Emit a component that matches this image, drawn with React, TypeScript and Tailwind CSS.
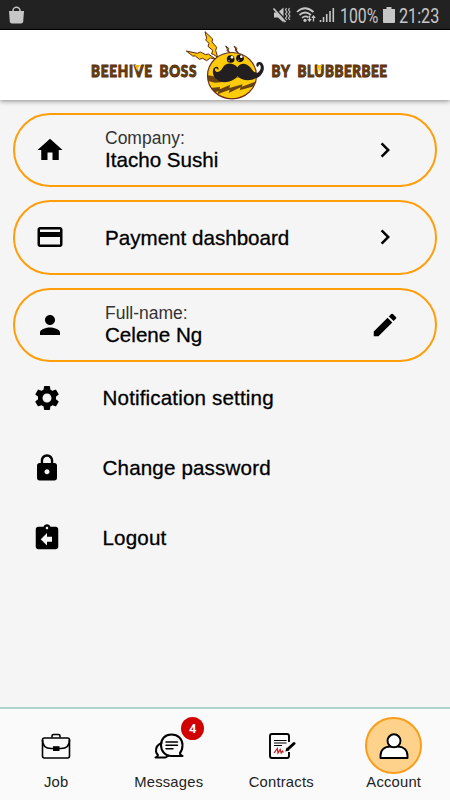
import type { ReactNode } from "react";
import {
  MdAssignmentReturn,
  MdChevronRight,
  MdCreditCard,
  MdEdit,
  MdHome,
  MdLock,
  MdPerson,
  MdSettings,
} from "react-icons/md";

const StatusBar = () => (
  <div className="flex h-[30px] items-center border-b border-black bg-[#222222] pl-2 text-[#c6c6c6]">
    <svg width="17" height="18" viewBox="0 0 17 18">
      <path
        d="M1 5h15l-.8 10.5Q15 17.500 13 17.500H4Q2 17.500 1.800 15.500Z"
        fill="currentColor"
      />
      <path
        d="M5 6V4.500a3.500 3.200 0 0 1 7 0V6"
        fill="none"
        stroke="currentColor"
        strokeWidth="1.500"
      />
    </svg>
    <svg width="63" height="18" viewBox="272 7 63 18" className="mt-[2px] ml-[247px]">
      <path d="M274 12.500h4l5.500-5v15l-5.500-5h-4z" fill="currentColor" />
      <path d="M273.500 7 287 21.500" stroke="#222" strokeWidth="1.800" />
      <path d="M273.500 8.500 285.500 22" stroke="currentColor" strokeWidth="1.700" />
      <path
        d="m286.500 8-1 2 1.500 2-1.500 2 1.500 2-1.500 2 1.500 2M289.500 8l-1 2 1.500 2-1.500 2 1.500 2-1.500 2 1.500 2"
        fill="none"
        stroke="currentColor"
        strokeWidth="1.100"
      />
      <path
        d="M297 12q8-7.500 16.500 0M299.500 15q5.500-5 11.500 0M302 18q3-3 6.500-.5"
        fill="none"
        stroke="currentColor"
        strokeWidth="1.700"
      />
      <circle cx="305" cy="20.300" r="1.600" fill="currentColor" />
      <path
        d="M309.500 15.500v5M313.500 16.500v5"
        fill="none"
        stroke="currentColor"
        strokeWidth="1.300"
      />
      <path d="m307.200 19 2.300 3 2.300-3zM311.200 18l2.300-3 2.300 3z" fill="currentColor" />
      <path
        d="M320.500 22v-2M323.500 22v-5M326.700 22v-8M330 22V11M333.300 22V8"
        stroke="currentColor"
        strokeWidth="1.600"
      />
    </svg>
    <span className="mt-[4px] ml-[5px] block w-[39px] origin-left scale-x-[0.81] font-['Roboto',sans-serif] text-[19.500px] leading-[30px] whitespace-nowrap">
      100%
    </span>
    <svg width="12" height="16" viewBox="0 0 12 16" className="ml-[4px]">
      <path d="M3.500 0h5v2H12v13q0 1-1 1H1q-1 0-1-1V2h3.500z" fill="currentColor" />
    </svg>
    <span className="mt-[4px] ml-[4px] block w-[44px] origin-left scale-x-[0.83] font-['Roboto',sans-serif] text-[19.500px] leading-[30px] whitespace-nowrap">
      21:23
    </span>
  </div>
);

const Logo = () => (
  <svg width="340" height="70" viewBox="70 30 340 70">
    <g
      transform="translate(0 76.700) scale(1 1.200)"
      fill="#6b4410"
      stroke="#5a2c0a"
      strokeWidth="0.800"
      fontFamily="'Lato', 'Liberation Sans', sans-serif"
      fontWeight="900"
      fontSize="13.500"
    >
      <text x="91" y="0" textLength="61">
        BEEHIVE
      </text>
      <text x="159.500" y="0" textLength="37">
        BOSS
      </text>
      <text x="271.500" y="0" textLength="18.500">
        BY
      </text>
      <text x="297.500" y="0" textLength="89.500">
        BLUBBERBEE
      </text>
    </g>
    <path d="m134.500 65 5.500 0-1.500 2.500-1.300 3.500z" fill="#f5b81c" />
    <path d="m317.500 65 4.500 0-1.500 3 1.500 0-4 5 1-3.500-2 0z" fill="#f5c51c" />
    <g transform="translate(190 28) scale(0.33333)">
      <g fill="#fbc70c" stroke="#5e2612" strokeWidth="3" strokeLinejoin="round">
        <path d="M45 11 68 33 66 42 80 58 77 67 83 88 70 79 65 78 68 67 54 55 57 46 47 36 50 31Z" />
        <path d="M-11 69 22 76 31 72 47 80 55 78 78 94 61 90 50 98 38 91 28 94 16 84 8 84Z" />
        <path d="m107 54 9 7-2 5 6 9-9-7 1-5zM132 54l9 7-2 5 6 9-9-7 1-5z" strokeWidth="3" />
      </g>
      <clipPath id="body">
        <ellipse cx="126" cy="143" rx="73" ry="69" />
      </clipPath>
      <g clipPath="url(#body)">
        <rect x="50" y="70" width="154" height="146" fill="#fccb0b" />
        <path
          d="M50 141 82 147 78 154 119 151 115 158 150 147 205 128 205 145 158 151 151 144 123 157 120 160 75 164 50 158Z"
          fill="#684311"
        />
        <path
          d="M55 181 90 177 89 184 121 170 118 180 158 169 155 176 200 160 195 174 149 187 152 178 116 195 119 185 82 199 86 190 57 196Z"
          fill="#684311"
        />
      </g>
      <ellipse cx="126" cy="143" rx="73.500" ry="69.500" fill="none" stroke="#6a2c18" strokeWidth="3.500" />
      <path
        d="M142 118C129 103 108 103 98 119 89 135 75 136 75 124 76 118 84 121 84 127 90 116 77 112 71 121 65 133 70 151 88 160 111 168 135 156 143 145 155 159 182 160 197 151 222 143 229 113 213 103 203 98 195 108 201 116 206 118 208 111 206 109 218 113 211 134 199 135 190 136 183 112 165 108 155 106 147 110 142 118Z"
        fill="#231f20"
      />
      <circle cx="122" cy="93" r="11.500" fill="#19110a" />
      <circle cx="150" cy="91" r="11.500" fill="#19110a" />
      <circle cx="126" cy="88" r="4" fill="#fff" />
      <circle cx="154" cy="86" r="4" fill="#fff" />
      <circle cx="117" cy="98" r="2.500" fill="#8d8d8d" />
      <circle cx="146" cy="97" r="2.500" fill="#8d8d8d" />
    </g>
  </svg>
);

interface ICard {
  icon: ReactNode;
  label?: string;
  title: string;
  action: ReactNode;
}

const Card = ({ icon, label, title, action }: ICard) => (
  <button className="flex h-[74.500px] w-full items-center rounded-full border-[2px] border-[#ff9d0a] pr-[35px] pl-[20px] text-left">
    {icon}
    <div className="ml-[40px] flex-1">
      {label ? (
        <p className="text-[17.500px] leading-[21px] text-[#333]">{label}</p>
      ) : (
        <div className="h-px" />
      )}
      <p className="text-[20.600px] leading-[22px] [-webkit-text-stroke:0.300px_black]">
        {title}
      </p>
    </div>
    {action}
  </button>
);

const cards: ICard[] = [
  {
    icon: <MdHome size={30} />,
    label: "Company:",
    title: "Itacho Sushi",
    action: <MdChevronRight size={30} />,
  },
  {
    icon: <MdCreditCard size={30} />,
    title: "Payment dashboard",
    action: <MdChevronRight size={30} />,
  },
  {
    icon: <MdPerson size={30} />,
    label: "Full-name:",
    title: "Celene Ng",
    action: <MdEdit size={30} />,
  },
];

const settings = [
  { icon: <MdSettings size={30} />, title: "Notification setting" },
  { icon: <MdLock size={30} />, title: "Change password" },
  { icon: <MdAssignmentReturn size={30} />, title: "Logout" },
];

const JobIcon = () => (
  <svg width="30" height="30" viewBox="0 0 30 30" fill="none" stroke="black" strokeWidth="1.600">
    <rect x="1.500" y="7" width="27" height="20" rx="2" />
    <path d="M11 6.500V5q0-1.500 1.500-1.500h5Q19 3.500 19 5v1.500" />
    <path d="M1.500 9q0 8.500 8.500 8.500h10q8.500 0 8.500-8.500" />
    <rect x="12" y="15.200" width="6.500" height="4.800" fill="black" stroke="none" />
  </svg>
);

const MessagesIcon = () => (
  <svg
    width="30"
    height="30"
    viewBox="0 0 30 30"
    fill="none"
    stroke="black"
    strokeWidth="2"
    strokeLinecap="round"
    strokeLinejoin="round"
  >
    <path d="M7.500 12Q1.500 14.500 2 20.500q.3 2 2 3.500-.5 2-2.500 2.500h10l3-1.800" />
    <path d="M17.500 3.500c-6.500 0-10.500 4.500-10.500 10.500S11 25 17.500 25h11q-2.500-.7-2.500-3 2.500-3 2.500-8C28.500 8 24 3.500 17.500 3.500Z" />
    <path d="M12 11h11.500M12 14.300h11.500M12 17.700h7" strokeWidth="1.400" />
  </svg>
);

const ContractsIcon = () => (
  <svg width="30" height="30" viewBox="0 0 30 30" fill="none" stroke="black">
    <path
      d="M23 11V5q0-2-2-2H6Q4 3 4 5v20q0 2 2 2h15q2 0 2-2v-4"
      strokeWidth="1.900"
    />
    <path d="M8 9.500h12.500M8 12h12.500M8 14.500h8" strokeWidth="1.100" />
    <path d="M28 12.500 22 18" strokeWidth="3" strokeLinecap="round" />
    <path d="m20.500 16.500-1.200 4 4-1z" fill="black" stroke="none" />
    <path
      d="m8 22 3.300-4.500.7 4.500 2.200-3.500 1 3.500 1.300-2 1 1.500"
      stroke="#c4171d"
      strokeWidth="1.200"
    />
  </svg>
);

const AccountIcon = () => (
  <svg width="30" height="30" viewBox="0 0 30 30" fill="white" stroke="black" strokeWidth="1.900">
    <path d="M1.500 27v-2c0-6 4-9.500 10-9.500h7c6 0 10 3.500 10 9.500v2Z" strokeLinejoin="round" />
    <circle cx="15" cy="9.800" r="6.500" />
  </svg>
);

const tabs = [
  { title: "Job", icon: <JobIcon /> },
  { title: "Messages", icon: <MessagesIcon />, badge: 4 },
  { title: "Contracts", icon: <ContractsIcon /> },
  { title: "Account", icon: <AccountIcon />, active: true },
];

const App = () => {
  return (
    <div className="flex h-[800px] w-[450px] flex-col overflow-hidden bg-[#f5f5f5] font-['Liberation_Sans',Arial,sans-serif] text-black">
      <StatusBar />
      <header className="flex h-[70px] justify-center bg-white pl-[30px] shadow-[0_1px_5px_rgba(0,0,0,0.45)]">
        <Logo />
      </header>

      <main className="flex-1 px-[13px] pt-[12.500px]">
        <div className="mb-[0.500px] flex flex-col gap-[13px]">
          {cards.map((card) => (
            <Card key={card.title} {...card} />
          ))}
        </div>
        {settings.map((item) => (
          <button
            key={item.title}
            className="flex h-[70px] w-full items-center pl-[19px] text-left"
          >
            {item.icon}
            <span className="mt-[2px] ml-[40.500px] text-[20.600px] tracking-[0.150px] [-webkit-text-stroke:0.300px_black]">
              {item.title}
            </span>
          </button>
        ))}
      </main>

      <nav className="grid h-[93px] grid-cols-4 border-t-2 border-[#acd3cd] bg-[#fafafa]">
        {tabs.map((tab) => (
          <button key={tab.title} className="flex flex-col items-center pt-2">
            <span
              className={
                tab.active
                  ? "flex size-[57px] items-center justify-center rounded-full border-2 border-[#fb9d1c] bg-[#ffd28c]"
                  : "relative flex size-[57px] items-center justify-center"
              }
            >
              {tab.icon}
              {tab.badge && (
                <span className="absolute top-0 -right-[7px] flex size-[23px] items-center justify-center rounded-full bg-[#d00000] font-['Roboto',sans-serif] text-[13px] font-bold text-white">
                  {tab.badge}
                </span>
              )}
            </span>
            <span className="text-[14.800px] leading-[17px] tracking-[0.200px] text-[#222]">
              {tab.title}
            </span>
          </button>
        ))}
      </nav>
    </div>
  );
};

export default App;
